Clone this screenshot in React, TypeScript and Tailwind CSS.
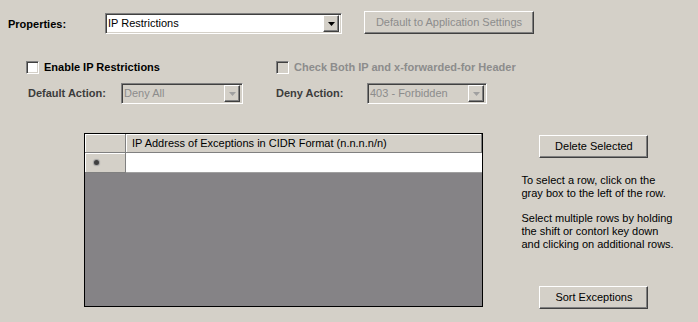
import React from 'react';

const sunken =
  'border border-t-[#808080] border-l-[#808080] border-b-white border-r-white shadow-[inset_1px_1px_0_#404040,inset_-1px_-1px_0_#d4d0c8]';
const raised =
  'border border-t-white border-l-white border-b-[#404040] border-r-[#404040] shadow-[inset_-1px_-1px_0_#808080]';

function DropArrow({ disabled }: { disabled?: boolean }) {
  return (
    <div className={`w-[16px] h-[17px] flex items-center justify-center bg-[#d4d0c8] ${raised}`}>
      <svg width="7" height="4" viewBox="0 0 7 4">
        <path d="M0 0h7L3.5 4z" fill={disabled ? '#a0a0a0' : '#000'} />
      </svg>
    </div>
  );
}

function Select({ value, width, disabled }: { value: string; width: string; disabled?: boolean }) {
  return (
    <div
      className={`${width} h-[21px] flex items-center justify-between pl-[2px] pr-[2px] ${sunken} ${
        disabled ? 'bg-[#d4d0c8] text-[#8c8c8c]' : 'bg-white text-black'
      }`}
    >
      <span className="leading-none">{value}</span>
      <DropArrow disabled={disabled} />
    </div>
  );
}

function Checkbox({ label, disabled }: { label: string; disabled?: boolean }) {
  return (
    <div className="flex items-center gap-[5px]">
      <div className={`w-[13px] h-[13px] ${sunken} ${disabled ? 'bg-[#d4d0c8]' : 'bg-white'}`} />
      <span className={`font-bold ${disabled ? 'text-[#8c8c8c]' : 'text-black'}`}>{label}</span>
    </div>
  );
}

function Button({ label, width, disabled }: { label: string; width: string; disabled?: boolean }) {
  return (
    <div
      className={`${width} h-[23px] flex items-center justify-center bg-[#d4d0c8] ${raised} ${
        disabled ? 'text-[#8c8c8c]' : 'text-black'
      }`}
    >
      {label}
    </div>
  );
}

export default function App() {
  return (
    <div className="w-[698px] h-[322px] bg-[#d4d0c8] text-[11px] text-black overflow-hidden font-['Liberation_Sans',Arial,sans-serif]">
      {/* Properties row */}
      <div className="flex items-start pt-[11px] h-[34px]">
        <span className="ml-[8px] mt-[5px] w-[97px] font-bold">Properties:</span>
        <div className="mt-[2px]">
          <Select value="IP Restrictions" width="w-[237px]" />
        </div>
        <div className="ml-[22px]">
          <Button label="Default to Application Settings" width="w-[170px]" disabled />
        </div>
      </div>

      {/* Checkboxes */}
      <div className="flex items-center mt-[27px] h-[13px]">
        <div className="ml-[26px] w-[250px]">
          <Checkbox label="Enable IP Restrictions" />
        </div>
        <Checkbox label="Check Both IP and x-forwarded-for Header" disabled />
      </div>

      {/* Actions */}
      <div className="flex items-center mt-[9px] h-[21px]">
        <span className="ml-[28px] w-[93px] font-bold text-[#3c3c3c]">Default Action:</span>
        <Select value="Deny All" width="w-[122px]" disabled />
        <span className="ml-[33px] w-[91px] font-bold text-[#3c3c3c]">Deny Action:</span>
        <Select value="403 - Forbidden" width="w-[120px]" disabled />
      </div>

      {/* Grid + side panel */}
      <div className="flex items-start mt-[29px]">
        <div className="ml-[84px] w-[403px] h-[174px] border border-black bg-[#858386] flex flex-col">
          <div className="flex h-[19px] bg-[#d4d0c8]">
            <div className="w-[41px] border-r border-b border-[#808080] shadow-[inset_1px_1px_0_#fff]" />
            <div className="flex-1 flex items-center pl-[6px] border-r border-b border-[#808080] shadow-[inset_1px_1px_0_#fff]">
              IP Address of Exceptions in CIDR Format (n.n.n.n/n)
            </div>
          </div>
          <div className="flex h-[20px]">
            <div className="w-[41px] bg-[#d4d0c8] border-r border-b border-[#808080] shadow-[inset_1px_1px_0_#fff] flex items-center pl-[9px]">
              <div className="w-[5px] h-[5px] rounded-full bg-[#404040] shadow-[0_0_1px_1px_#a0a0a0]" />
            </div>
            <div className="flex-1 bg-white border-b border-[#a0a0a0]" />
          </div>
        </div>

        <div className="ml-[56px] w-[160px] flex flex-col h-[176px]">
          <div className="mt-[2px]">
            <Button label="Delete Selected" width="w-[109px]" />
          </div>
          <div className="mt-[16px] -ml-[18px] leading-[13px]">
            <p>To select a row, click on the</p>
            <p>gray box to the left of the row.</p>
            <p className="mt-[12px]">Select multiple rows by holding</p>
            <p>the shift or contorl key down</p>
            <p>and clicking on additional rows.</p>
          </div>
          <div className="mt-auto">
            <Button label="Sort Exceptions" width="w-[109px]" />
          </div>
        </div>
      </div>
    </div>
  );
}
